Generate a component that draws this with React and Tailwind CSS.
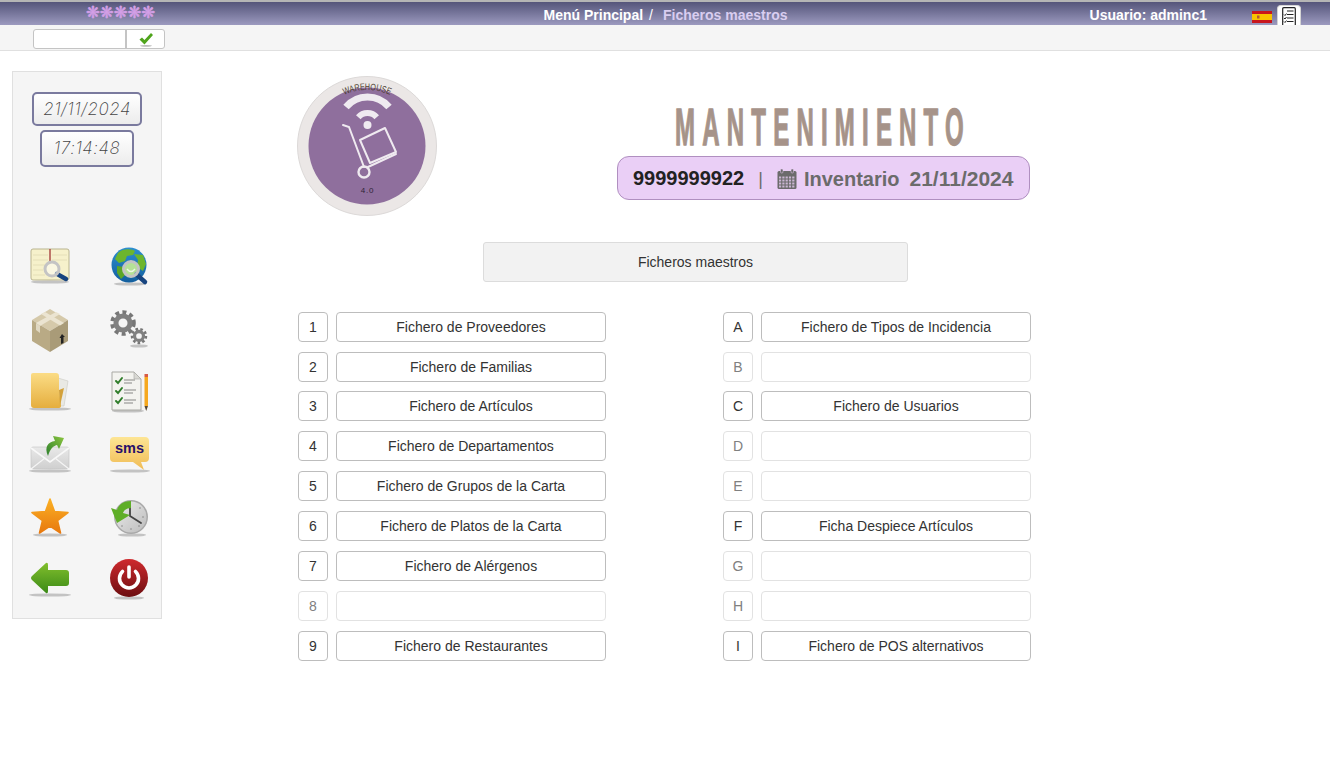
import React from 'react'

const LEFT = [
    ['1', 'Fichero de Proveedores'], ['2', 'Fichero de Familias'], ['3', 'Fichero de Artículos'],
    ['4', 'Fichero de Departamentos'], ['5', 'Fichero de Grupos de la Carta'], ['6', 'Fichero de Platos de la Carta'],
    ['7', 'Fichero de Alérgenos'], ['8', ''], ['9', 'Fichero de Restaurantes'],
]
const RIGHT = [
    ['A', 'Fichero de Tipos de Incidencia'], ['B', ''], ['C', 'Fichero de Usuarios'],
    ['D', ''], ['E', ''], ['F', 'Ficha Despiece Artículos'],
    ['G', ''], ['H', ''], ['I', 'Fichero de POS alternativos'],
]

const Shadow = ({ cx = 22, cy = 38, rx = 20 }) => <ellipse cx={cx} cy={cy} rx={rx} ry="1.6" fill="#999" opacity="0.55" />

const Lens = ({ cx, cy, r = 6.5, hx, hy }) => (
    <>
        <line x1={cx + r * 0.7} y1={cy + r * 0.7} x2={hx} y2={hy} stroke="#17447f" strokeWidth="4.5" strokeLinecap="round" />
        <circle cx={cx} cy={cy} r={r} fill="#ffffff" fillOpacity="0.45" stroke="#c4c4c4" strokeWidth="3" />
    </>
)

const BookIcon = () => (
    <svg width="44" height="44" viewBox="0 0 44 44">
        <Shadow cy={37} rx={19} />
        <rect x="3" y="4" width="38" height="31" rx="2" fill="#f6f1cb" stroke="#b9b48f" />
        <g stroke="#e2dcb4" strokeWidth="0.8">
            <line x1="5" y1="10" x2="20" y2="10" /><line x1="5" y1="15" x2="20" y2="15" /><line x1="5" y1="20" x2="17" y2="20" /><line x1="5" y1="25" x2="15" y2="25" /><line x1="5" y1="30" x2="17" y2="30" />
            <line x1="24" y1="10" x2="39" y2="10" /><line x1="24" y1="15" x2="39" y2="15" />
        </g>
        <line x1="22" y1="4" x2="22" y2="17" stroke="#a8433f" strokeWidth="1.4" />
        <Lens cx={24} cy={24} r={7} hx={38} hy={34} />
    </svg>
)

const GlobeIcon = () => (
    <svg width="44" height="44" viewBox="0 0 44 44">
        <defs>
            <linearGradient id="gb" x1="0" y1="0" x2="0" y2="1"><stop offset="0" stopColor="#2d8fd0" /><stop offset="1" stopColor="#135f9e" /></linearGradient>
        </defs>
        <Shadow cx={22} cy={39} rx={16} />
        <circle cx="21" cy="20" r="17.5" fill="url(#gb)" />
        <path d="M10 8 C15 3 24 4 27 6 L25 10 L19 11 L17 16 L11 18 L7 14 Z" fill="#6cb52d" />
        <path d="M26 9 L35 10 L38 19 L35 26 L29 22 L30 15 Z" fill="#6cb52d" />
        <path d="M9 21 L16 22 L17 30 L13 34 L9 28 Z" fill="#5ca626" />
        <circle cx="23" cy="24" r="7" fill="#7ac843" />
        <path d="M19 24 Q23 29 27 24" fill="none" stroke="#e4f3d0" strokeWidth="1.4" />
        <Lens cx={23} cy={24} r={7.5} hx={37} hy={37} />
    </svg>
)

const BoxIcon = () => (
    <svg width="44" height="44" viewBox="0 0 44 44">
        <polygon points="22,1 40,12 22,23 4,12" fill="#d5c9aa" />
        <polygon points="4,12 22,23 22,44 4,33" fill="#b9aa85" />
        <polygon points="40,12 22,23 22,44 40,33" fill="#a99b78" />
        <polygon points="13,6 17,4 36,15 32,17.5" fill="#ebe4d1" />
        <polygon points="28,4 32,6 12,18 8,15" fill="#ebe4d1" />
        <polygon points="8,15 12,18 12,25 8,22" fill="#e0d8c2" />
        <path d="M34 26 L37 29 L35.5 29 L35.5 35 L33 36 L33 30 L31.5 30 Z" fill="#222" />
    </svg>
)

const Gear = ({ cx, cy, r, w, dash }) => (
    <>
        <circle cx={cx} cy={cy} r={r + w * 0.9} fill="none" stroke="#777" strokeWidth={w * 0.9} strokeDasharray={dash} />
        <circle cx={cx} cy={cy} r={r + w * 0.1} fill="none" stroke="#808080" strokeWidth={w * 1.1} />
    </>
)

const GearsIcon = () => (
    <svg width="44" height="44" viewBox="0 0 44 44">
        <Shadow cx={31} cy={38} rx={9} />
        <Gear cx={15} cy={15} r={6.6} w={4.6} dash="3.9 3.2" />
        <Gear cx={31} cy={28} r={4.2} w={3} dash="2.6 2.2" />
    </svg>
)

const FolderIcon = () => (
    <svg width="44" height="44" viewBox="0 0 44 44">
        <defs>
            <linearGradient id="fo" x1="0" y1="0" x2="0" y2="1"><stop offset="0" stopColor="#fbdc85" /><stop offset="1" stopColor="#e5ae3e" /></linearGradient>
        </defs>
        <Shadow cy={39} rx={21} />
        <polygon points="30,8 40,11 36,36 29,36" fill="#e9e9e4" stroke="#c9c9c2" strokeWidth="0.6" />
        <path d="M5 3 H28 Q31 3 31 6 V20 L33 36 Q33 38 30 38 H6 Q3 38 3 35 V5 Q3 3 5 3 Z" fill="url(#fo)" />
        <path d="M31 20 L36 18 L32 36 Z" fill="#d3a13a" />
    </svg>
)

const ListIcon = () => (
    <svg width="44" height="44" viewBox="0 0 44 44">
        <Shadow cx={20} cy={41} rx={16} />
        <path d="M4 2 H26 L33 9 V40 H4 Z" fill="#f3f3ef" stroke="#a9a9a4" />
        <path d="M26 2 V9 H33 Z" fill="#d8d8d3" stroke="#a9a9a4" strokeWidth="0.6" />
        <g fill="none" stroke="#2f7d2a" strokeWidth="2" strokeLinecap="round">
            <path d="M8 11 L10 13 L14 8" /><path d="M8 21 L10 23 L14 18" /><path d="M8 31 L10 33 L14 28" />
        </g>
        <g stroke="#9a9a96" strokeWidth="1.2">
            <line x1="16" y1="10" x2="27" y2="10" /><line x1="16" y1="13" x2="24" y2="13" />
            <line x1="16" y1="20" x2="28" y2="20" /><line x1="16" y1="23" x2="25" y2="23" />
            <line x1="16" y1="30" x2="28" y2="30" /><line x1="16" y1="33" x2="25" y2="33" />
        </g>
        <rect x="36.5" y="4" width="3.5" height="3" fill="#d85b45" />
        <rect x="36.5" y="7" width="3.5" height="29" fill="#f6a81e" />
        <polygon points="36.5,36 40,36 38.2,41" fill="#5a4a34" />
    </svg>
)

const MailIcon = () => (
    <svg width="44" height="44" viewBox="0 0 44 44">
        <defs>
            <linearGradient id="ma" x1="0" y1="0" x2="0" y2="1"><stop offset="0" stopColor="#e9e9e9" /><stop offset="1" stopColor="#cfcfcf" /></linearGradient>
            <linearGradient id="mg" x1="0" y1="1" x2="1" y2="0"><stop offset="0" stopColor="#2c7f2d" /><stop offset="1" stopColor="#8cc63f" /></linearGradient>
        </defs>
        <Shadow cy={38} rx={21} />
        <rect x="3" y="14" width="38" height="22" rx="2" fill="url(#ma)" stroke="#c4c4c4" strokeWidth="0.6" />
        <path d="M3 15 L22 29 L41 15" fill="none" stroke="#f8f8f8" strokeWidth="1.6" />
        <path d="M3 36 L17 25 M41 36 L27 25" stroke="#f5f5f5" strokeWidth="1.2" />
        <path d="M20 23 C16 14 20 9 27 8 L25 3 L36 5 L31 16 L29 12 C25 13 22 16 20 23 Z" fill="url(#mg)" />
    </svg>
)

const SmsIcon = () => (
    <svg width="44" height="44" viewBox="0 0 44 44">
        <defs>
            <linearGradient id="sm" x1="0" y1="0" x2="0" y2="1"><stop offset="0" stopColor="#fde594" /><stop offset="1" stopColor="#f0bb54" /></linearGradient>
        </defs>
        <Shadow cy={38} rx={20} />
        <path d="M6 4 H37 Q41 4 41 8 V25 Q41 29 37 29 H33 L36 37 L25 29 H6 Q2 29 2 25 V8 Q2 4 6 4 Z" fill="url(#sm)" />
        <text x="21.5" y="19.5" textAnchor="middle" fontFamily="'Liberation Sans', sans-serif" fontWeight="700" fontSize="14.5" fill="#27106a">sms</text>
    </svg>
)

const StarIcon = () => (
    <svg width="44" height="44" viewBox="0 0 44 44">
        <defs>
            <linearGradient id="st" x1="0" y1="0" x2="0" y2="1"><stop offset="0" stopColor="#fbb024" /><stop offset="1" stopColor="#e8790e" /></linearGradient>
        </defs>
        <Shadow cy={40} rx={17} />
        <polygon points="22,4 26.5,16.5 40,17.5 29.5,25.5 32.5,38 22,31 11.5,38 14.5,25.5 4,17.5 17.5,16.5" fill="url(#st)" stroke="url(#st)" strokeWidth="1.6" strokeLinejoin="round" />
    </svg>
)

const ClockIcon = () => (
    <svg width="44" height="44" viewBox="0 0 44 44">
        <defs>
            <linearGradient id="cl" x1="0" y1="0" x2="1" y2="1"><stop offset="0" stopColor="#ececec" /><stop offset="1" stopColor="#bcbcbc" /></linearGradient>
        </defs>
        <Shadow cx={24} cy={40} rx={14} />
        <circle cx="23" cy="22" r="17" fill="#a9a9a9" />
        <circle cx="23" cy="22" r="15.5" fill="url(#cl)" />
        <path d="M22 21 L22 10 M22 21 L33 28" stroke="#444" strokeWidth="1.8" strokeLinecap="round" />
        <g fill="#777">
            <circle cx="35" cy="22" r="0.7" /><circle cx="23" cy="34" r="0.7" /><circle cx="32" cy="13" r="0.7" /><circle cx="14" cy="31" r="0.7" /><circle cx="31" cy="31" r="0.7" />
        </g>
        <path d="M23 6 C14 6 10 11 9 15 L3 13 L9 28 L22 20 L15 18 C16 15 19 13 23 13 Z" fill="#5fae28" />
    </svg>
)

const BackIcon = () => (
    <svg width="44" height="44" viewBox="0 0 44 44">
        <defs>
            <linearGradient id="ar" x1="0" y1="0" x2="0" y2="1"><stop offset="0" stopColor="#82bf2d" /><stop offset="1" stopColor="#3b8a17" /></linearGradient>
        </defs>
        <Shadow cy={37} rx={21} />
        <path d="M18 5 Q20 4 20 7 V12 H38 Q41 12 41 15 V25 Q41 28 38 28 H20 V33 Q20 36 18 35 L4 22 Q2 20 4 18 Z" fill="url(#ar)" />
    </svg>
)

const PowerIcon = () => (
    <svg width="44" height="44" viewBox="0 0 44 44">
        <defs>
            <linearGradient id="po" x1="0" y1="0" x2="0" y2="1"><stop offset="0" stopColor="#cf2a2e" /><stop offset="1" stopColor="#6c0d10" /></linearGradient>
        </defs>
        <Shadow cx={21} cy={40} rx={15} />
        <circle cx="21" cy="20" r="19" fill="url(#po)" />
        <path d="M14.5 13.5 A9.5 9.5 0 1 0 27.5 13.5" fill="none" stroke="#fff" strokeWidth="3.6" strokeLinecap="round" />
        <line x1="21" y1="9" x2="21" y2="19" stroke="#fff" strokeWidth="3.6" strokeLinecap="round" />
    </svg>
)

const Logo = () => (
    <svg width="140" height="140" viewBox="0 0 140 140" className="block">
        <defs>
            <path id="logo-arc" d="M14 70 A56 56 0 0 1 126 70" />
        </defs>
        <circle cx="70" cy="70" r="69.5" fill="#ebe7e6" stroke="#dcd9d8" />
        <circle cx="70" cy="70" r="58.5" fill="#8f6f9d" />
        <text fontFamily="'Liberation Sans', sans-serif" fontSize="9.5" fill="#4f3f33">
            <textPath href="#logo-arc" startOffset="50%" textAnchor="middle" textLength="47" lengthAdjust="spacingAndGlyphs">WAREHOUSE</textPath>
        </text>
        <g fill="none" stroke="#efeaf0">
            <path d="M49 31 A28 28 0 0 1 92 31" strokeWidth="7" />
            <path d="M61.3 41.3 A12 12 0 0 1 79.7 41.3" strokeWidth="6" />
            <path d="M46 49 L52 51 L67 91" strokeWidth="2" strokeLinecap="round" />
            <path d="M71 91 L99 78" strokeWidth="2" strokeLinecap="round" />
            <circle cx="67" cy="96" r="5.5" strokeWidth="2.4" />
            <polygon points="63,64 88,52 99,76 73,87" strokeWidth="2" strokeLinejoin="round" />
        </g>
        <circle cx="70.5" cy="49" r="4" fill="#efeaf0" />
        <text x="70.5" y="117" textAnchor="middle" fontFamily="'Liberation Sans', sans-serif" fontSize="8" letterSpacing="0.8" fill="#2f2438">4.0</text>
    </svg>
)

const FlagIcon = () => (
    <svg width="20" height="12" viewBox="0 0 20 12" className="block">
        <rect width="20" height="12" fill="#c8161d" />
        <rect y="3" width="20" height="6" fill="#f8c300" />
        <rect x="5" y="4.5" width="2.5" height="3" fill="#b2563a" />
    </svg>
)

const SheetIcon = () => (
    <svg width="14" height="19" viewBox="0 0 14 19" className="block">
        <path d="M0.7 19 V1.7 Q0.7 0.7 1.7 0.7 H12.3 Q13.3 0.7 13.3 1.7 V19" fill="#fff" stroke="#222" strokeWidth="1.2" />
        <g stroke="#222" strokeWidth="1.2">
            <line x1="5" y1="4" x2="11.5" y2="4" /><line x1="5" y1="7.5" x2="11.5" y2="7.5" /><line x1="5" y1="11" x2="11.5" y2="11" /><line x1="5" y1="14.5" x2="11.5" y2="14.5" />
        </g>
        <g fill="none" stroke="#222" strokeWidth="1">
            <path d="M2 7.5 L3 8.5 L4.5 6.5" /><path d="M2 11 L3 12 L4.5 10" /><path d="M2 14.5 L3 15.5 L4.5 13.5" />
        </g>
    </svg>
)

// grid of little squares like the glyph in the reference
const CalendarIcon = () => (
    <svg width="20" height="20" viewBox="0 0 20 20" className="ml-[14px] block">
        <rect x="0.5" y="2" width="19" height="18" rx="1.5" fill="#6b6b6b" />
        <rect x="3.5" y="0" width="2.5" height="4" rx="1" fill="#6b6b6b" stroke="#eacff6" strokeWidth="0.5" />
        <rect x="14" y="0" width="2.5" height="4" rx="1" fill="#6b6b6b" stroke="#eacff6" strokeWidth="0.5" />
        <g fill="#eacff6" opacity="0.75">
            {[7.5, 10.5, 13.5, 16.5].map(y => [2, 5.3, 8.6, 11.9, 15.2].map(x => <rect key={x + '-' + y} x={x} y={y} width="2.2" height="2" />))}
        </g>
    </svg>
)

const Row = ({ item, tight }) => {
    const [key, label] = item
    const off = !label
    return (
        <div className={"flex gap-2 h-[30px]" + (tight ? " -mt-px" : "")}>
            <div className={"w-[30px] flex items-center justify-center rounded border " + (off ? "border-[#e2e2e2] text-[#808080]" : "border-[#bdbdbd] text-[#333]")}>{key}</div>
            <div className={"w-[270px] flex items-center justify-center rounded border " + (off ? "border-[#e2e2e2]" : "border-[#bdbdbd]")}>{label}</div>
        </div>
    )
}

export default function App() {
    return (
        <div className="h-[761px] overflow-hidden bg-white font-['Liberation_Sans',Arial,sans-serif] text-sm text-[#333]">
            <div className="h-[25px] border-t-2 border-[#b5b5b5] bg-gradient-to-b from-[#55557a] to-[#9c9abf] grid grid-cols-[1fr_auto_1fr] items-center text-sm font-bold text-white">
                <div className="pl-[86px] text-[16.5px] leading-none text-[#d39fe6] [-webkit-text-stroke:0.5px_#d39fe6] font-['DejaVu_Sans',sans-serif]">❋❋❋❋❋</div>
                <div className="flex mt-[2px] ml-px">
                    <span>Menú Principal</span>
                    <span className="ml-1.5 font-normal">/</span>
                    <span className="ml-2.5 text-[#d9cdf0]">Ficheros maestros</span>
                </div>
                <div className="flex items-center justify-end pr-[29px] self-stretch">
                    <span className="mr-[45px] mt-[2px]">Usuario: adminc1</span>
                    <div className="mt-[7px]"><FlagIcon /></div>
                    <div className="ml-[5px] w-6 h-5 self-end rounded-t bg-white border border-b-0 border-[#d5d5d5] flex justify-center pt-px overflow-hidden"><SheetIcon /></div>
                </div>
            </div>
            <div className="h-[26px] bg-[#f5f5f5] border-b border-[#e0e0e0] pl-[33px] pt-[4px]">
                <div className="flex w-[132px] h-[20px] rounded-[3px] border border-[#c4c4c4] bg-white overflow-hidden">
                    <div className="w-[93px] border-r-2 border-[#c4c4c4]" />
                    <div className="flex-1 flex items-center justify-center">
                        <svg width="16" height="15" viewBox="0 0 16 15">
                            <ellipse cx="8" cy="13.8" rx="6" ry="0.9" fill="#bbb" />
                            <path d="M1.5 7.5 L4 5.5 L6.5 8 L13 1 L15 3 L6.5 12.5 Z" fill="#4fa41c" />
                        </svg>
                    </div>
                </div>
            </div>
            <div className="flex">
                <div className="ml-3 mt-5 w-[150px] h-[548px] bg-[#f5f5f5] border border-[#e0e0e0] flex flex-col items-center">
                    <div className="mt-5 w-[110px] h-[34px] rounded-[5px] border-2 border-[#7a7a9e] bg-gradient-to-b from-white to-[#ececec] flex items-center justify-center font-['Inter',sans-serif] italic font-extralight text-[17px] text-[#444] tracking-[0.5px]">21/11/2024</div>
                    <div className="mt-1 w-[94px] h-[37px] rounded-[5px] border-2 border-[#7a7a9e] bg-gradient-to-b from-white to-[#ececec] flex items-center justify-center font-['Inter',sans-serif] italic font-extralight text-[17px] text-[#444] tracking-[0.5px]">17:14:48</div>
                    <div className="mt-[78px] self-start ml-[15px] grid grid-cols-[44px_44px] gap-x-9 gap-y-[18.6px]">
                        <BookIcon /><GlobeIcon />
                        <BoxIcon /><GearsIcon />
                        <FolderIcon /><ListIcon />
                        <MailIcon /><SmsIcon />
                        <StarIcon /><ClockIcon />
                        <BackIcon /><PowerIcon />
                    </div>
                </div>
                <div className="ml-[136px] pt-[25px]">
                    <div className="flex -ml-px">
                        <Logo />
                        <div className="ml-[180px] w-[413px] pt-[32px] flex flex-col items-center">
                            <div className="h-[37px] w-[292px] -ml-px flex items-center justify-center whitespace-nowrap font-bold text-2xl tracking-[7.2px] text-[#a69389] [-webkit-text-stroke:0.6px_#a69389] scale-y-[2.15]">MANTENIMIENTO</div>
                            <div className="mt-[11px] w-full h-[44px] rounded-xl border border-[#b08fc0] bg-[#eacff6] flex items-center pl-[15px] pt-px text-[20px] font-bold text-[#6b6b6b] whitespace-nowrap">
                                <span className="text-[#222]">9999999922</span>
                                <span className="ml-[14px] font-normal text-lg">|</span>
                                <CalendarIcon />
                                <span className="ml-[7px] pt-px">Inventario</span>
                                <span className="ml-[10px] text-[21px]">21/11/2024</span>
                            </div>
                        </div>
                    </div>
                    <div className="mt-[26px] ml-[185px] w-[425px] h-10 rounded-[3px] border border-[#dcdcdc] bg-[#f2f2f2] flex items-center justify-center">Ficheros maestros</div>
                    <div className="mt-[30px] flex gap-[117px]">
                        <div className="flex flex-col gap-2.5">{LEFT.map((i, n) => <Row key={i[0]} item={i} tight={n === 2} />)}</div>
                        <div className="flex flex-col gap-2.5">{RIGHT.map((i, n) => <Row key={i[0]} item={i} tight={n === 2} />)}</div>
                    </div>
                </div>
            </div>
        </div>
    )
}
